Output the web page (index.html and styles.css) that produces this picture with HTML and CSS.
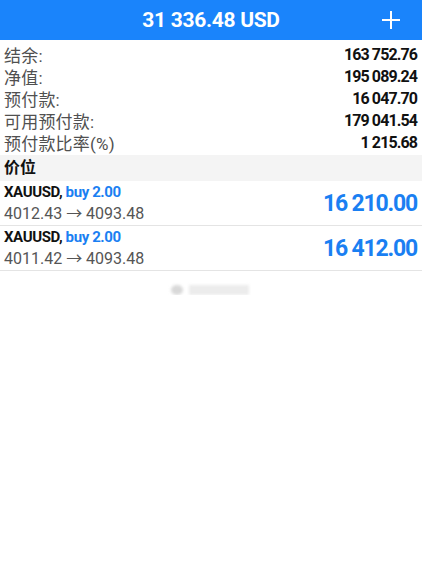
FILE: index.html
```html
<!DOCTYPE html>
<html lang="zh">
<head>
<meta charset="utf-8">
<link rel="stylesheet" href="styles.css">
</head>
<body>
<header class="header">
  <span class="spacer"></span>
  <span class="title">31 336.48 USD</span>
  <svg class="plus" width="20" height="20" viewBox="0 0 20 20"><path d="M10 1V19M1 10H19" stroke="#fff" stroke-width="2" fill="none"/></svg>
</header>
<section class="summary">
  <div class="row"><span class="label">结余:</span><span class="value">163 752.76</span></div>
  <div class="row"><span class="label">净值:</span><span class="value">195 089.24</span></div>
  <div class="row"><span class="label">预付款:</span><span class="value">16 047.70</span></div>
  <div class="row"><span class="label">可用预付款:</span><span class="value">179 041.54</span></div>
  <div class="row"><span class="label">预付款比率(%)</span><span class="value">1 215.68</span></div>
</section>
<div class="section-title">价位</div>
<section class="positions">
  <div class="pos">
    <div class="pos-info">
      <div class="pos-name">XAUUSD, <span class="buy">buy 2.00</span></div>
      <div class="pos-price">4012.43 → 4093.48</div>
    </div>
    <div class="profit">16 210.00</div>
  </div>
  <div class="pos">
    <div class="pos-info">
      <div class="pos-name">XAUUSD, <span class="buy">buy 2.00</span></div>
      <div class="pos-price">4011.42 → 4093.48</div>
    </div>
    <div class="profit">16 412.00</div>
  </div>
</section>
<div class="watermark"><span class="wm-icon"></span><span class="wm-text"></span></div>
</body>
</html>
```
FILE: styles.css
```css
html, body {
  margin: 0;
  padding: 0;
  background: #fff;
}
body {
  font-family: Roboto, "Noto Sans CJK SC", sans-serif;
  color: #111;
}
.header {
  height: 40px;
  background: #1a84fb;
  display: grid;
  grid-template-columns: 1fr auto 1fr;
  align-items: center;
}
.title {
  color: #fff;
  font-weight: 700;
  font-size: 21px;
  letter-spacing: -0.3px;
}
.plus {
  justify-self: end;
  margin-right: 21px;
}
.summary {
  padding: 3px 5px 2px 4px;
}
.row {
  height: 22px;
  display: flex;
  justify-content: space-between;
  align-items: center;
}
.label {
  font-size: 17px;
  color: #505050;
  letter-spacing: 0.2px;
}
.value {
  font-size: 16px;
  font-weight: 700;
  letter-spacing: -0.9px;
  color: #111;
}
.section-title {
  background: #f4f4f4;
  height: 26px;
  line-height: 26px;
  padding-left: 4px;
  font-size: 16px;
  font-weight: 700;
  color: #111;
}
.pos {
  height: 44px;
  border-bottom: 1px solid #e4e4e4;
  display: flex;
  justify-content: space-between;
  align-items: center;
  padding: 0 5px 0 4px;
}
.pos-name {
  font-size: 15px;
  font-weight: 700;
  letter-spacing: -0.4px;
  line-height: 21px;
}
.buy {
  color: #1a7ff2;
}
.pos-price {
  font-size: 16px;
  color: #555;
  line-height: 21px;
}
.profit {
  font-size: 23px;
  font-weight: 700;
  color: #1a7ff2;
  letter-spacing: -1.2px;
}
.watermark {
  display: flex;
  justify-content: center;
  align-items: center;
  gap: 6px;
  margin-top: 14px;
  padding-right: 2px;
  filter: blur(1.5px);
}
.wm-icon {
  width: 12px;
  height: 10px;
  border-radius: 50%;
  background: #d8d8d8;
}
.wm-text {
  width: 60px;
  height: 10px;
  background: #ececec;
}
```
